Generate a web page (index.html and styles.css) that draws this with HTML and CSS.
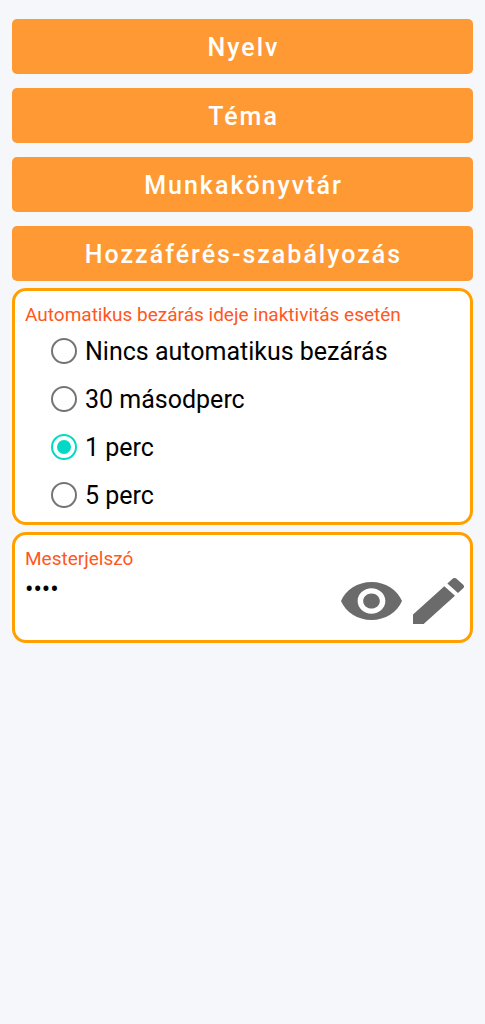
FILE: index.html
```html
<!DOCTYPE html>
<html lang="hu">
<head>
    <meta charset="UTF-8">
    <meta name="viewport" content="width=device-width, initial-scale=1.0">
    <title>Beállítások</title>
    <link rel="stylesheet" href="styles.css">
</head>
<body>
    <main class="settings">
        <nav class="menu">
            <button class="menu-button" type="button">Nyelv</button>
            <button class="menu-button" type="button">Téma</button>
            <button class="menu-button" type="button">Munkakönyvtár</button>
            <button class="menu-button" type="button">Hozzáférés-szabályozás</button>
        </nav>

        <fieldset class="card timeout">
            <legend class="card-title">Automatikus bezárás ideje inaktivitás esetén</legend>
            <label class="option"><input type="radio" name="timeout" value="0">Nincs automatikus bezárás</label>
            <label class="option"><input type="radio" name="timeout" value="30">30 másodperc</label>
            <label class="option"><input type="radio" name="timeout" value="60" checked>1 perc</label>
            <label class="option"><input type="radio" name="timeout" value="300">5 perc</label>
        </fieldset>

        <section class="card">
            <label class="card-title" for="password">Mesterjelszó</label>
            <div class="password-row">
                <input class="password" id="password" type="password" value="1234" readonly>
                <button class="icon-button" type="button" aria-label="Jelszó megjelenítése">
                    <svg class="icon-eye" viewBox="1 4.5 22 15" preserveAspectRatio="none">
                        <path d="M12 4.5C7 4.5 2.73 7.61 1 12c1.73 4.39 6 7.5 11 7.5s9.27-3.11 11-7.5c-1.73-4.39-6-7.5-11-7.5zM12 17c-2.76 0-5-2.24-5-5s2.24-5 5-5 5 2.24 5 5-2.24 5-5 5zm0-8c-1.66 0-3 1.34-3 3s1.34 3 3 3 3-1.34 3-3-1.34-3-3-3z"/>
                    </svg>
                </button>
                <button class="icon-button" type="button" aria-label="Jelszó szerkesztése">
                    <svg class="icon-edit" viewBox="3 3 18 18" preserveAspectRatio="none">
                        <path d="M3 17.25V21h3.75L17.81 9.94l-3.75-3.75L3 17.25zM20.71 7.04c.39-.39.39-1.02 0-1.41l-2.34-2.34c-.39-.39-1.02-.39-1.41 0l-1.83 1.83 3.75 3.75 1.83-1.83z"/>
                    </svg>
                </button>
            </div>
        </section>
    </main>
</body>
</html>
```
FILE: styles.css
```css
* {
    box-sizing: border-box;
}

body {
    margin: 0;
    background: #f5f7fb;
    color: #000;
    font-family: Roboto, sans-serif;
}

button,
input {
    font-family: inherit;
}

.settings {
    display: flex;
    flex-direction: column;
    gap: 7px;
    padding: 19px 12px;
}

/* Orange menu buttons */
.menu {
    display: flex;
    flex-direction: column;
    gap: 14px;
}

.menu-button {
    height: 55px;
    padding: 2px 0 0 2px;
    border: none;
    border-radius: 5px;
    background: #ff9933;
    color: #fff;
    font-size: 25px;
    font-weight: 500;
    letter-spacing: 2px;
    cursor: pointer;
}

/* White cards */
.card {
    margin: 0;
    padding: 12px 6px 12px 10px;
    border: 3px solid #ffa000;
    border-radius: 14px;
    background: #fff;
}

.card-title {
    display: block;
    padding: 0;
    color: #ff5722;
    font-size: 19px;
    line-height: 24px;
}

.timeout {
    padding-bottom: 3px;
}

/* keeps the legend inside the border */
.timeout .card-title {
    float: left;
    width: 100%;
}

.option {
    display: flex;
    clear: both;
    align-items: center;
    gap: 8px;
    height: 48px;
    padding-left: 26px;
    font-size: 25px;
}

.option input {
    appearance: none;
    width: 26px;
    height: 26px;
    margin: 0;
    padding: 4px;
    border: 2px solid #757575;
    border-radius: 50%;
}

.option input:checked {
    border-color: #03dac5;
    background: #03dac5 content-box;
}

/* Master password */
.password-row {
    display: flex;
    align-items: center;
    gap: 11px;
    padding-top: 2px;
}

.password {
    flex: 1;
    align-self: flex-start;
    min-width: 0;
    height: 32px;
    padding: 0;
    border: none;
    outline: none;
    background: none;
    color: #000;
    font-size: 25px;
}

.icon-button {
    display: flex;
    align-items: center;
    height: 55px;
    padding: 0;
    border: none;
    background: none;
    cursor: pointer;
}

.icon-button svg {
    fill: #6b6b6b;
}

.icon-eye {
    width: 61px;
    height: 38px;
}

.icon-edit {
    width: 51px;
    height: 46px;
}
```
